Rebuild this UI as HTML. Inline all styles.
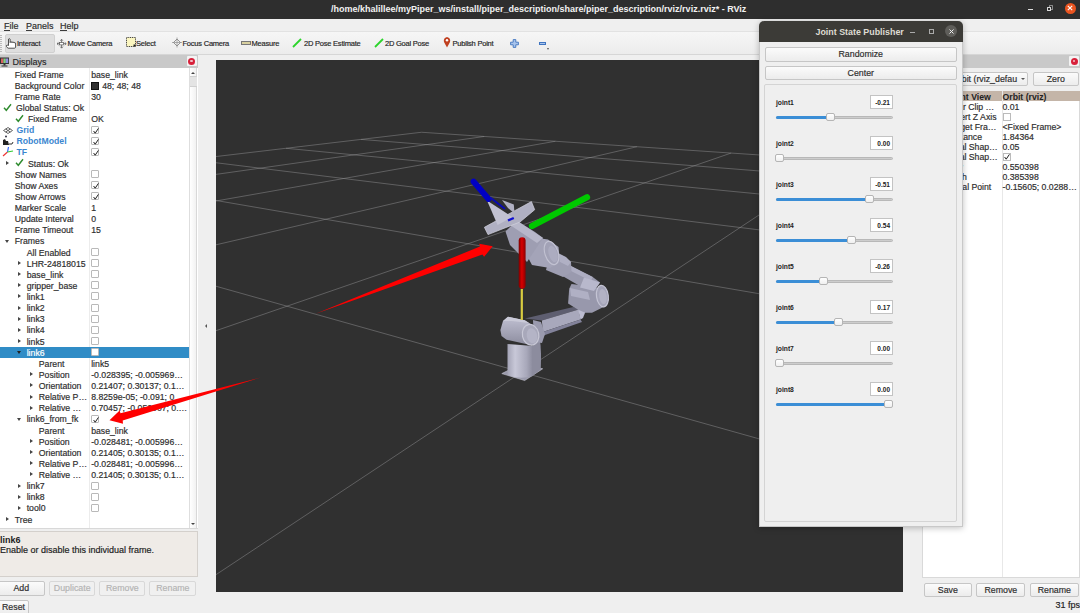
<!DOCTYPE html>
<html><head><meta charset="utf-8">
<style>
*{box-sizing:border-box}
span,div{-webkit-text-stroke:0.18px currentColor}
#title .t,.row .blue,.jl,.jv,.bold0,.hdr span{-webkit-text-stroke:0}
html,body{margin:0;padding:0}
body{width:1080px;height:613px;overflow:hidden;position:relative;background:#efefef;font-family:"Liberation Sans",sans-serif;color:#2e2e2e}
.abs{position:absolute}
#title{position:absolute;left:0;top:0;width:1080px;height:18.5px;background:#2e2e2e}
#title .t{position:absolute;left:331px;top:4px;font-size:9px;font-weight:bold;color:#f2f2f2;white-space:nowrap;letter-spacing:0}
#menu{position:absolute;left:0;top:18.5px;width:1080px;height:13px;background:#efefef;border-bottom:1px solid #e2e2e2}
#menu span{position:absolute;top:2.3px;font-size:9px;color:#2e2e2e}
#menu u{text-decoration:none;border-bottom:1px solid #3c3c3c;line-height:8px;display:inline-block}
#tool{position:absolute;left:0;top:31.5px;width:1080px;height:23px;background:linear-gradient(#f6f6f6,#ececec);border-bottom:1px solid #d6d6d6}
.tb{position:absolute;top:7.6px;font-size:7.5px;letter-spacing:-0.22px;color:#262626;white-space:nowrap}
.row{position:absolute;left:0;width:189.5px;height:11.125px;font-size:8.7px;white-space:nowrap;color:#2e2e2e}
.row.sel{background:#308cc6;color:#fff}
.row .lab{position:absolute;top:1.2px}
.row .val{position:absolute;left:91.2px;top:1.2px}
.row .blue{color:#3a86cf;font-weight:bold}
.row .ico{position:absolute}
.row .cb{position:absolute;left:91px;top:1.6px;width:8px;height:8px;border:1px solid #b9b9b9;border-radius:1px;background:#fff}
.row .arr{position:absolute;top:3.5px;width:0;height:0;border-left:3px solid #444;border-top:2.5px solid transparent;border-bottom:2.5px solid transparent}
.row.sel .arr{border-left-color:#222}
.row .darr{position:absolute;top:4.5px;width:0;height:0;border-top:3px solid #444;border-left:2.5px solid transparent;border-right:2.5px solid transparent}
.row.sel .darr{border-top-color:#222}
.btn{position:absolute;border:1px solid #c6c6c6;border-radius:2px;background:linear-gradient(#fbfbfb,#ececec);font-size:8.8px;text-align:center;color:#2e2e2e}
.btn.dis{color:#b4b4b4;border-color:#d8d8d8;background:#f0f0f0}
.jl{position:absolute;left:776px;font-size:6.7px;font-weight:bold;color:#222;line-height:8px}
.jv{position:absolute;left:869.5px;width:23.5px;height:14.5px;background:#fff;border:1px solid #c3c3c3;font-size:6.5px;font-weight:bold;color:#222;text-align:right;padding-right:2px;line-height:13.5px}
.tr{position:absolute;left:776px;width:117px;height:3px;border-radius:1.5px;background:#cdcdcd;border:0.5px solid #b8b8b8}
.tf{position:absolute;left:776px;height:3px;border-radius:1.5px;background:#3b8ed6}
.hd{position:absolute;width:9px;height:8.5px;background:linear-gradient(#ffffff,#f0f0f0);border:1px solid #b5b5b5;border-radius:2px}
.rrow{position:absolute;left:922px;width:158px;height:9.93px;font-size:8.7px;white-space:nowrap;color:#2e2e2e}
.rrow .a{position:absolute;left:0;top:1.5px;width:79px;text-align:right;overflow:visible}
.rrow .b{position:absolute;left:80.5px;top:1.5px}
</style></head>
<body>
<!-- title bar -->
<div id="title"><span class="t">/home/khalillee/myPiper_ws/install/piper_description/share/piper_description/rviz/rviz.rviz* - RViz</span>
<div class="abs" style="left:1027.5px;top:9px;width:5.5px;height:1.2px;background:#ddd"></div>
<div class="abs" style="left:1049.1px;top:5.4px;width:4px;height:4.4px;border:1px solid #8a8a8a;border-radius:0.5px"></div><div class="abs" style="left:1047.3px;top:7px;width:4px;height:4px;border:1.1px solid #dcdcdc;border-radius:0.5px;background:#2e2e2e"></div>
<div class="abs" style="left:1064.5px;top:2.6px;width:11px;height:11px;border-radius:50%;background:#e95420"></div>
<svg class="abs" style="left:1067px;top:5px" width="6" height="6" viewBox="0 0 6 6"><path d="M0.8 0.8 L5.2 5.2 M5.2 0.8 L0.8 5.2" stroke="#fff" stroke-width="1.1"/></svg>
</div>
<!-- menu -->
<div id="menu"><span style="left:4px"><u>F</u>ile</span><span style="left:26px"><u>P</u>anels</span><span style="left:60px"><u>H</u>elp</span></div>
<!-- toolbar -->
<div id="tool">
 <div class="abs" style="left:5px;top:2.5px;width:49.5px;height:18.5px;background:#dedede;border:1px solid #d0d0d0;border-radius:2px"></div>
 <svg class="abs" style="left:5px;top:5px" width="12" height="12" viewBox="5 36.5 12 12"><path d="M8.5 45 L8.5 38.6 Q9.3 37.6 10.1 38.6 L10.1 42 L10.2 41.5 Q11 40.9 11.9 41.6 L11.9 42.2 L12.1 41.8 Q12.9 41.2 13.8 41.9 L13.8 42.5 L14 42.3 Q14.8 41.8 15.6 42.6 L15.6 46.6 Q15.3 47.6 14.6 47.7 L8.2 47.7 Q7 47.2 6.5 46 L6.4 45 Q7.3 44.3 8.5 45 Z" fill="#fff" stroke="#333" stroke-width="0.85" stroke-linejoin="round"/></svg>
 <span class="tb" style="left:17px">Interact</span>
 <svg class="abs" style="left:56px;top:5px" width="11" height="12" viewBox="56 36.5 11 12"><path d="M61.6 38.8 L61.6 47.6 M57 43.2 L66.2 43.2" stroke="#666" stroke-width="0.9"/><path d="M60.3 40.2 L61.6 38.8 L62.9 40.2 M60.3 46.2 L61.6 47.6 L62.9 46.2 M58.4 41.9 L57 43.2 L58.4 44.5 M64.8 41.9 L66.2 43.2 L64.8 44.5" fill="none" stroke="#666" stroke-width="0.9"/><rect x="59.6" y="42" width="4" height="2.4" fill="#fff" stroke="#555" stroke-width="0.7"/></svg>
 <span class="tb" style="left:67.5px">Move Camera</span>
 <svg class="abs" style="left:126px;top:5.5px" width="10" height="10" viewBox="0 0 10 10"><rect x="0.5" y="0.5" width="9" height="9" fill="#fbf6c0" stroke="#222" stroke-width="0.9" stroke-dasharray="1 0.8"/><rect x="7.5" y="7.5" width="2" height="2" fill="#222"/></svg>
 <span class="tb" style="left:136px">Select</span>
 <svg class="abs" style="left:172px;top:5.5px" width="10" height="11" viewBox="0 0 10 11"><path d="M5 0.5 L5 10.5 M0 5.5 L10 5.5" stroke="#999" stroke-width="0.8"/><path d="M5 2 L8.5 5.5 L5 9 L1.5 5.5Z" fill="none" stroke="#888" stroke-width="0.9"/></svg>
 <span class="tb" style="left:182.5px">Focus Camera</span>
 <div class="abs" style="left:241px;top:9.5px;width:10px;height:3.5px;background:#d8d0a0;border:0.8px solid #777"></div>
 <span class="tb" style="left:251.5px">Measure</span>
 <svg class="abs" style="left:292px;top:6px" width="10" height="10" viewBox="0 0 10 10"><path d="M1 9 L9 1" stroke="#2bd42b" stroke-width="1.8"/></svg>
 <span class="tb" style="left:304px">2D Pose Estimate</span>
 <svg class="abs" style="left:374px;top:6px" width="10" height="10" viewBox="0 0 10 10"><path d="M1 9 L9 1" stroke="#2bd42b" stroke-width="1.8"/></svg>
 <span class="tb" style="left:385px">2D Goal Pose</span>
 <svg class="abs" style="left:443px;top:4.5px" width="8" height="12" viewBox="0 0 8 12"><path d="M4 11.5 L1 6 Q0 2 4 1 Q8 2 7 6 Z" fill="#c04020"/><circle cx="4" cy="4.2" r="1.2" fill="#fff"/></svg>
 <span class="tb" style="left:452.5px">Publish Point</span>
 <svg class="abs" style="left:510px;top:7px" width="9" height="9" viewBox="0 0 9 9"><path d="M3.2 0.6 H5.8 V3.2 H8.4 V5.8 H5.8 V8.4 H3.2 V5.8 H0.6 V3.2 H3.2 Z" fill="#a8c4ec" stroke="#3f74c0" stroke-width="0.9"/></svg>
 <div class="abs" style="left:538.5px;top:10px;width:7.5px;height:3px;background:#a8c4ec;border:0.8px solid #3f74c0"></div>
 <div class="abs" style="left:547px;top:16.5px;width:0;height:0;border-top:2px solid #555;border-left:1.5px solid transparent;border-right:1.5px solid transparent"></div>
 <div class="abs" style="left:0;top:3px;width:2px;height:17px;background:repeating-linear-gradient(#bbb 0 1px,transparent 1px 2px)"></div>
</div>

<!-- left panel -->
<div class="abs" style="left:0;top:54.5px;width:197.5px;height:14px;background:#c9c9c9"></div>
<svg class="abs" style="left:0;top:56.5px" width="10" height="10" viewBox="0 0 10 10"><rect x="0" y="0.5" width="9" height="6.5" fill="#333"/><rect x="1" y="1.5" width="2.4" height="4.5" fill="#d86060"/><rect x="3.4" y="1.5" width="2.4" height="4.5" fill="#80d080"/><rect x="5.8" y="1.5" width="2.4" height="4.5" fill="#9090e0"/><rect x="3.5" y="7" width="2" height="1.5" fill="#333"/><rect x="1.5" y="8.5" width="6" height="1" fill="#333"/></svg>
<span class="abs" style="left:12.5px;top:57px;font-size:9px;color:#2a2a2a">Displays</span>
<div class="abs" style="left:186.5px;top:56px;width:10px;height:10px;background:#f3f3f3;border-radius:1px"></div>
<div class="abs" style="left:188px;top:57.5px;width:7px;height:7px;border-radius:50%;background:#d8203a"></div>
<div class="abs" style="left:190.3px;top:59.8px;width:2.4px;height:2.4px;border-radius:50%;background:#f0c0c8"></div>
<!-- tree -->
<div class="abs" style="left:0;top:68.4px;width:197.5px;height:460px;background:#fff;overflow:hidden">
</div>
<div class="abs" style="left:89.2px;top:68.4px;width:1px;height:460px;background:#ececec"></div>
<div class="row" style="top:68.400px"><span class="lab" style="left:14.8px">Fixed Frame</span><span class="val">base_link</span></div><div class="row" style="top:79.525px"><span class="lab" style="left:14.8px">Background Color</span><span class="val"><span style="display:inline-block;width:8px;height:8px;background:#303030;border:0.5px solid #111;vertical-align:-1px;margin-right:3px"></span>48; 48; 48</span></div><div class="row" style="top:90.650px"><span class="lab" style="left:14.8px">Frame Rate</span><span class="val">30</span></div><div class="row" style="top:101.775px"><span class="ico" style="left:3.2px;top:1px"><svg width="9" height="9" viewBox="0 0 9 9"><path d="M1 4.8 L3.3 7.3 L8 1.3" fill="none" stroke="#2e8b2e" stroke-width="1.4"/></svg></span><span class="lab" style="left:16px">Global Status: Ok</span></div><div class="row" style="top:112.900px"><span class="ico" style="left:14.8px;top:1px"><svg width="9" height="9" viewBox="0 0 9 9"><path d="M1 4.8 L3.3 7.3 L8 1.3" fill="none" stroke="#2e8b2e" stroke-width="1.4"/></svg></span><span class="lab" style="left:28px">Fixed Frame</span><span class="val">OK</span></div><div class="row" style="top:124.025px"><span class="ico" style="left:3px;top:2px"><svg width="10" height="7" viewBox="0 0 10 7"><path d="M5 0.5 L9.5 3.5 L5 6.5 L0.5 3.5Z M2.7 2 L7.3 5 M7.3 2 L2.7 5" fill="none" stroke="#555" stroke-width="0.9"/></svg></span><span class="lab blue" style="left:16.4px">Grid</span><span class="cb" style="background:#fff"><svg width="8" height="8" viewBox="0 0 8 8" style="position:absolute;left:0;top:0"><path d="M1.6 4 L3.2 6.2 L6.4 1.4" fill="none" stroke="#222" stroke-width="1"/></svg></span></div><div class="row" style="top:135.150px"><span class="ico" style="left:2px;top:0px"><svg width="12" height="11" viewBox="0 0 12 11"><circle cx="4" cy="1.5" r="1" fill="#334"/><path d="M1 10 L1 5 L3 4 L4 6 L6 6 L7 10 Z" fill="#222"/><path d="M7 9 L10 9 L11 7" stroke="#333" fill="none"/></svg></span><span class="lab blue" style="left:16.4px">RobotModel</span><span class="cb" style="background:#fff"><svg width="8" height="8" viewBox="0 0 8 8" style="position:absolute;left:0;top:0"><path d="M1.6 4 L3.2 6.2 L6.4 1.4" fill="none" stroke="#222" stroke-width="1"/></svg></span></div><div class="row" style="top:146.275px"><span class="ico" style="left:2px;top:0px"><svg width="12" height="11" viewBox="0 0 12 11"><path d="M1 10 L5.5 6" stroke="#e33" stroke-width="1.2"/><path d="M5.5 6 L6.5 1" stroke="#36f" stroke-width="1.2"/><path d="M5.5 6 L11 5" stroke="#3c3" stroke-width="1.2"/></svg></span><span class="lab blue" style="left:16.4px">TF</span><span class="cb" style="background:#fff"><svg width="8" height="8" viewBox="0 0 8 8" style="position:absolute;left:0;top:0"><path d="M1.6 4 L3.2 6.2 L6.4 1.4" fill="none" stroke="#222" stroke-width="1"/></svg></span></div><div class="row" style="top:157.400px"><span class="ico" style="left:14.8px;top:1px"><svg width="9" height="9" viewBox="0 0 9 9"><path d="M1 4.8 L3.3 7.3 L8 1.3" fill="none" stroke="#2e8b2e" stroke-width="1.4"/></svg></span><span class="arr" style="left:5.5px"></span><span class="lab" style="left:28px">Status: Ok</span></div><div class="row" style="top:168.525px"><span class="lab" style="left:14.8px">Show Names</span><span class="cb" style="background:#fff"></span></div><div class="row" style="top:179.650px"><span class="lab" style="left:14.8px">Show Axes</span><span class="cb" style="background:#fff"><svg width="8" height="8" viewBox="0 0 8 8" style="position:absolute;left:0;top:0"><path d="M1.6 4 L3.2 6.2 L6.4 1.4" fill="none" stroke="#222" stroke-width="1"/></svg></span></div><div class="row" style="top:190.775px"><span class="lab" style="left:14.8px">Show Arrows</span><span class="cb" style="background:#fff"><svg width="8" height="8" viewBox="0 0 8 8" style="position:absolute;left:0;top:0"><path d="M1.6 4 L3.2 6.2 L6.4 1.4" fill="none" stroke="#222" stroke-width="1"/></svg></span></div><div class="row" style="top:201.900px"><span class="lab" style="left:14.8px">Marker Scale</span><span class="val">1</span></div><div class="row" style="top:213.025px"><span class="lab" style="left:14.8px">Update Interval</span><span class="val">0</span></div><div class="row" style="top:224.150px"><span class="lab" style="left:14.8px">Frame Timeout</span><span class="val">15</span></div><div class="row" style="top:235.275px"><span class="darr" style="left:4.5px"></span><span class="lab" style="left:14.8px">Frames</span></div><div class="row" style="top:246.400px"><span class="lab" style="left:26.7px">All Enabled</span><span class="cb" style="background:#fff"></span></div><div class="row" style="top:257.525px"><span class="arr" style="left:17.5px"></span><span class="lab" style="left:26.7px">LHR-24818015</span><span class="cb" style="background:#fff"></span></div><div class="row" style="top:268.650px"><span class="arr" style="left:17.5px"></span><span class="lab" style="left:26.7px">base_link</span><span class="cb" style="background:#fff"></span></div><div class="row" style="top:279.775px"><span class="arr" style="left:17.5px"></span><span class="lab" style="left:26.7px">gripper_base</span><span class="cb" style="background:#fff"></span></div><div class="row" style="top:290.900px"><span class="arr" style="left:17.5px"></span><span class="lab" style="left:26.7px">link1</span><span class="cb" style="background:#fff"></span></div><div class="row" style="top:302.025px"><span class="arr" style="left:17.5px"></span><span class="lab" style="left:26.7px">link2</span><span class="cb" style="background:#fff"></span></div><div class="row" style="top:313.150px"><span class="arr" style="left:17.5px"></span><span class="lab" style="left:26.7px">link3</span><span class="cb" style="background:#fff"></span></div><div class="row" style="top:324.275px"><span class="arr" style="left:17.5px"></span><span class="lab" style="left:26.7px">link4</span><span class="cb" style="background:#fff"></span></div><div class="row" style="top:335.400px"><span class="arr" style="left:17.5px"></span><span class="lab" style="left:26.7px">link5</span><span class="cb" style="background:#fff"></span></div><div class="row sel" style="top:346.525px"><span class="darr" style="left:16.5px"></span><span class="lab" style="left:26.7px">link6</span><span class="cb" style="background:#fff"></span></div><div class="row" style="top:357.650px"><span class="lab" style="left:38.8px">Parent</span><span class="val">link5</span></div><div class="row" style="top:368.775px"><span class="arr" style="left:29.5px"></span><span class="lab" style="left:38.8px">Position</span><span class="val">-0.028395; -0.005969…</span></div><div class="row" style="top:379.900px"><span class="arr" style="left:29.5px"></span><span class="lab" style="left:38.8px">Orientation</span><span class="val">0.21407; 0.30137; 0.1…</span></div><div class="row" style="top:391.025px"><span class="arr" style="left:29.5px"></span><span class="lab" style="left:38.8px">Relative P…</span><span class="val">8.8259e-05; -0.091; 0</span></div><div class="row" style="top:402.150px"><span class="arr" style="left:29.5px"></span><span class="lab" style="left:38.8px">Relative …</span><span class="val">0.70457; -0.050007; 0.…</span></div><div class="row" style="top:413.275px"><span class="darr" style="left:16.5px"></span><span class="lab" style="left:26.7px">link6_from_fk</span><span class="cb" style="background:#fff"><svg width="8" height="8" viewBox="0 0 8 8" style="position:absolute;left:0;top:0"><path d="M1.6 4 L3.2 6.2 L6.4 1.4" fill="none" stroke="#222" stroke-width="1"/></svg></span></div><div class="row" style="top:424.400px"><span class="lab" style="left:38.8px">Parent</span><span class="val">base_link</span></div><div class="row" style="top:435.525px"><span class="arr" style="left:29.5px"></span><span class="lab" style="left:38.8px">Position</span><span class="val">-0.028481; -0.005996…</span></div><div class="row" style="top:446.650px"><span class="arr" style="left:29.5px"></span><span class="lab" style="left:38.8px">Orientation</span><span class="val">0.21405; 0.30135; 0.1…</span></div><div class="row" style="top:457.775px"><span class="arr" style="left:29.5px"></span><span class="lab" style="left:38.8px">Relative P…</span><span class="val">-0.028481; -0.005996…</span></div><div class="row" style="top:468.900px"><span class="arr" style="left:29.5px"></span><span class="lab" style="left:38.8px">Relative …</span><span class="val">0.21405; 0.30135; 0.1…</span></div><div class="row" style="top:480.025px"><span class="arr" style="left:17.5px"></span><span class="lab" style="left:26.7px">link7</span><span class="cb" style="background:#fff"></span></div><div class="row" style="top:491.150px"><span class="arr" style="left:17.5px"></span><span class="lab" style="left:26.7px">link8</span><span class="cb" style="background:#fff"></span></div><div class="row" style="top:502.275px"><span class="arr" style="left:17.5px"></span><span class="lab" style="left:26.7px">tool0</span><span class="cb" style="background:#fff"></span></div><div class="row" style="top:513.400px"><span class="arr" style="left:5.5px"></span><span class="lab" style="left:14.8px">Tree</span></div>
<div class="abs" style="left:189.2px;top:68.4px;width:8.3px;height:460px;background:linear-gradient(90deg,#ffffff,#f2f2f2);border-left:0.8px solid #dedede;border-right:0.6px solid #d8d8d8"></div>
<div class="abs" style="left:191px;top:71.5px;width:0;height:0;border-bottom:2.5px solid #444;border-left:2.5px solid transparent;border-right:2.5px solid transparent"></div>
<div class="abs" style="left:189.5px;top:76px;width:7.8px;height:11.4px;background:#e4e4e4;border-top:0.6px solid #d0d0d0;border-bottom:0.6px solid #d0d0d0"></div>
<div class="abs" style="left:191px;top:523px;width:0;height:0;border-top:2.5px solid #444;border-left:2.5px solid transparent;border-right:2.5px solid transparent"></div>
<div class="abs" style="left:0;top:528px;width:197.5px;height:1px;background:#d8d8d8"></div>
<!-- description -->
<div class="abs" style="left:0;top:531px;width:197.5px;height:45.5px;background:#efebe7;border:1px solid #d4d0cc;border-left:none"></div>
<span class="abs bold0" style="left:0;top:534.5px;font-size:9px;font-weight:bold;color:#222">link6</span>
<span class="abs" style="left:0;top:544.5px;font-size:9px;color:#222;white-space:nowrap">Enable or disable this individual frame.</span>
<div class="btn" style="left:-2px;top:581px;width:46.5px;height:14.5px;line-height:12.5px">Add</div>
<div class="btn dis" style="left:48.9px;top:581px;width:46.6px;height:14.5px;line-height:12.5px">Duplicate</div>
<div class="btn dis" style="left:99.3px;top:581px;width:46.2px;height:14.5px;line-height:12.5px">Remove</div>
<div class="btn dis" style="left:149.4px;top:581px;width:47px;height:14.5px;line-height:12.5px">Rename</div>
<div class="btn" style="left:-2px;top:599.5px;width:31px;height:15px;line-height:12.5px">Reset</div>

<!-- splitter arrow -->
<div class="abs" style="left:204.5px;top:324px;width:0;height:0;border-right:2.5px solid #555;border-top:2px solid transparent;border-bottom:2px solid transparent"></div>

<!-- viewport -->
<svg class="abs" style="left:216px;top:60px" width="687" height="532" viewBox="0 0 687 532">
<rect width="687" height="532" fill="#303030"/>
<g stroke="#a0a0a4" stroke-opacity="0.5" stroke-width="0.85" fill="none"><line x1="205.53" y1="72.26" x2="1663.17" y2="170.17"/><line x1="205.53" y1="72.26" x2="-18250.76" y2="2253.26"/><line x1="145.05" y1="79.41" x2="1945.61" y2="222.06"/><line x1="268.23" y1="76.47" x2="-75786.32" y2="10831.11"/><line x1="70.00" y1="88.28" x2="2488.54" y2="321.81"/><line x1="339.40" y1="81.25" x2="-60733.47" y2="10831.11"/><line x1="-25.59" y1="99.57" x2="3960.83" y2="592.31"/><line x1="420.89" y1="86.73" x2="-45680.62" y2="10831.11"/><line x1="-151.51" y1="114.45" x2="22919.10" y2="4075.45"/><line x1="515.12" y1="93.06" x2="-30627.78" y2="10831.11"/><line x1="-324.90" y1="134.94" x2="37737.26" y2="10831.11"/><line x1="625.34" y1="100.46" x2="-15574.93" y2="10831.11"/><line x1="-578.85" y1="164.95" x2="13207.36" y2="10831.11"/><line x1="755.98" y1="109.23" x2="-522.08" y2="10831.11"/><line x1="-986.47" y1="213.12" x2="-11322.55" y2="10831.11"/><line x1="913.30" y1="119.80" x2="14530.77" y2="10831.11"/><line x1="-1747.79" y1="303.09" x2="-35852.46" y2="10831.11"/><line x1="1106.40" y1="132.77" x2="29583.62" y2="10831.11"/><line x1="-3675.94" y1="530.94" x2="-60382.36" y2="10831.11"/><line x1="1349.06" y1="149.07" x2="44636.47" y2="10831.11"/><line x1="-18250.76" y1="2253.26" x2="-84912.27" y2="10831.11"/><line x1="1663.17" y1="170.17" x2="59689.32" y2="10831.11"/></g>
<g transform="translate(-216,-60)">
<defs>
<linearGradient id="ped" x1="0" y1="0" x2="1" y2="0"><stop offset="0" stop-color="#a4a4b6"/><stop offset="0.3" stop-color="#c8c8d8"/><stop offset="0.75" stop-color="#a8a8ba"/><stop offset="1" stop-color="#8a8a9c"/></linearGradient>
<linearGradient id="ax_r" x1="0" y1="0" x2="1" y2="0"><stop offset="0" stop-color="#7a0000"/><stop offset="0.45" stop-color="#d80000"/><stop offset="1" stop-color="#8a0000"/></linearGradient>
<linearGradient id="cylA" x1="0" y1="0" x2="0" y2="1"><stop offset="0" stop-color="#c0c0d2"/><stop offset="1" stop-color="#8c8c9e"/></linearGradient>
</defs>
<!-- base plate -->
<path d="M501.8 373.6 L524.7 380.5 L542.7 368.8 L522 363.5 Z" fill="#9a9aac" stroke="#c4c4d2" stroke-width="0.6"/>
<!-- pedestal -->
<path d="M507.5 344 L533 346 L533 376 Q520 380 507.5 375 Z" fill="url(#ped)"/>
<path d="M532.5 342 L540 341 Q541.5 350 540.8 369 L532.5 376 Z" fill="#8c8c9e"/>
<!-- upper arm -->
<path d="M524.9 318.6 L573.3 306.9 L578.7 309.6 L541.9 320.4 Z" fill="#5e5e70"/>
<path d="M541.9 320.4 L578.7 309.6 L580.5 319.5 L542.8 332 Z" fill="#a8a8bc"/>
<path d="M542.8 332 L580.5 319.5 L582 322 L545 335 L540 338 Z" fill="#82829a"/>
<path d="M578 309 L590 300 L583 318 L580.5 319.5 Z" fill="#bcbcd0"/>
<path d="M533 320 L541 322 L545 334 L542 343 L534 342 Z" fill="#9a9aae"/>
<!-- shoulder -->
<path d="M500.4 330 L503 321 L508 316.8 L524.7 320.2 L531.6 324.4 L538.5 333 L537.8 342 L531.6 345.2 L506.6 339.7 L501.5 336 Z" fill="url(#cylA)"/>
<path d="M503 321 L508 316.8 L524.7 320.2 L529 323 L512 321 Z" fill="#cacad8"/>
<ellipse cx="530.6" cy="334.8" rx="8.2" ry="10.4" transform="rotate(-12 530.6 334.8)" fill="#a8a8ba" stroke="#c8c8d6" stroke-width="1.2"/>
<ellipse cx="532" cy="335.8" rx="5.2" ry="7.6" transform="rotate(-12 532 335.8)" fill="#b4b4c6"/>
<!-- elbow housing -->
<path d="M568.1 303.5 L569.2 288.7 L571.5 284.1 L592 286.4 L603 290 L607 300 L603.5 307 L592 312.7 L585.2 312.7 L577.2 309.2 Z" fill="#9898ac"/>
<path d="M570 288 L588 292 L590 300 L571 296 Z" fill="#b0b0c4"/>

<ellipse cx="602.4" cy="296.1" rx="5.9" ry="10.8" transform="rotate(-8 602.4 296.1)" fill="#a4a4b8" stroke="#c4c4d4" stroke-width="1.2"/>
<ellipse cx="603" cy="296.5" rx="3.8" ry="7.6" transform="rotate(-8 603 296.5)" fill="#b2b2c4"/>
<!-- forearm rod -->
<path d="M566 263.5 L592.7 277 L600 282.5 L594 291 L585 289 L562.5 276 Z" fill="#9a9aae"/>
<path d="M566 263.5 L592.7 277 L591 281 L565 268 Z" fill="#aeaec2"/>
<path d="M584 277.5 L600 282.5 L594 291 L580 287.5 Z" fill="#b8b8cc"/>
<!-- link4 segment -->
<path d="M550 254 L563 256 L571 262 L571.5 272 L563 277 L546 270 Z" fill="#9e9eb2"/>
<path d="M556 252 L566 257 L571 262 L568 266 L556 260 Z" fill="#b0b0c4"/>
<!-- wrist housing -->
<path d="M523 248 L538 238 L548 239.5 L558.5 247 L560 262 L550 268 L532 265 Z" fill="#a4a4b8"/>
<ellipse cx="551.5" cy="253" rx="6.6" ry="12" transform="rotate(-18 551.5 253)" fill="#a2a2b6" stroke="#c2c2d2" stroke-width="1.1"/>
<ellipse cx="553" cy="254" rx="4.2" ry="8.5" transform="rotate(-18 553 254)" fill="#acacc0"/>
<!-- wrist rod link6 -->
<path d="M505.5 231.6 L516.6 220.5 L535 232 L543 238 L535 250 L527 262 L510 245 Z" fill="#9e9eb2"/>
<path d="M510 225 L516.6 220.5 L543 238 L537 243 Z" fill="#b8b8ca"/>
<!-- gripper cross -->
<path d="M484.4 227.3 L531.4 201.6 L534.7 209.7 L520 222 L488 234.6 Z" fill="#b0b0c2" stroke="#d2d2de" stroke-width="0.7"/>
<path d="M487 200.5 L512.3 217 L497.6 225.1 Z" fill="#c2c2d2"/>
<path d="M502 200.1 L513.8 204.5 L514.5 213.4 L508 208 Z" fill="#b0b0c2"/>
<!-- axes -->
<path d="M473.5 181.5 L488.5 199" stroke="#0000c4" stroke-width="5.8" stroke-linecap="round"/>
<path d="M490.3 197.5 L505 209" stroke="#0a0ab4" stroke-width="2"/>
<path d="M508 220.5 L513.8 218" stroke="#1010d0" stroke-width="2.4"/>
<path d="M532 226 L587 197.2" stroke="#00c800" stroke-width="6.2" stroke-linecap="round"/>
<rect x="518.7" y="237.2" width="6.9" height="51.5" rx="3.4" fill="url(#ax_r)"/>
<path d="M521.8 289 L521.8 320" stroke="#d8cc40" stroke-width="2.2"/>
</g>

</svg>

<!-- right panel -->
<div class="abs" style="left:921px;top:54.5px;width:159px;height:13.5px;background:#c9c9c9"></div>
<div class="abs" style="left:1069px;top:56px;width:10px;height:10px;background:#f3f3f3;border-radius:1px"></div>
<div class="abs" style="left:1070.5px;top:57.5px;width:7px;height:7px;border-radius:50%;background:#d8203a"></div>
<div class="abs" style="left:1072.8px;top:59.8px;width:2.4px;height:2.4px;border-radius:50%;background:#f0c0c8"></div>
<div class="btn" style="left:930px;top:71.5px;width:98px;height:14.5px;text-align:left;padding-left:21px;line-height:12.5px;white-space:nowrap;overflow:hidden">Orbit (rviz_defau</div>
<div class="abs" style="left:1021px;top:77.5px;width:0;height:0;border-top:2.5px solid #555;border-left:2.5px solid transparent;border-right:2.5px solid transparent"></div>
<div class="btn" style="left:1032.5px;top:71.5px;width:46.5px;height:14.5px;line-height:12.5px">Zero</div>
<div class="abs" style="left:922px;top:90.5px;width:158px;height:487.5px;background:#fff;border:1px solid #d9d9d9"></div>
<div class="abs" style="left:922px;top:91.2px;width:158px;height:9.5px;background:#c4b5a8"></div>
<div class="abs" style="left:1001.5px;top:91.2px;width:1px;height:486px;background:#e8e8e8"></div>
<div class="rrow hdr" style="top:90.5px;font-weight:bold;color:#222"><span class="a" style="width:68.8px">Current View</span><span class="b">Orbit (rviz)</span></div>
<div class="rrow" style="top:100.7px"><span class="a" style="width:72.3px">Near Clip …</span><span class="b">0.01</span></div>
<div class="rrow" style="top:110.6px"><span class="a" style="width:74.5px">Invert Z Axis</span><span class="b"><span style="display:inline-block;width:8px;height:8px;border:1px solid #bbb;margin-top:1px"></span></span></div>
<div class="rrow" style="top:120.5px"><span class="a" style="width:74.5px">Target Fra…</span><span class="b">&lt;Fixed Frame&gt;</span></div>
<div class="rrow" style="top:130.5px"><span class="a" style="width:60.0px">Distance</span><span class="b">1.84364</span></div>
<div class="rrow" style="top:140.4px"><span class="a" style="width:75.8px">Focal Shap…</span><span class="b">0.05</span></div>
<div class="rrow" style="top:150.3px"><span class="a" style="width:75.8px">Focal Shap…</span><span class="b"><span style="position:relative;display:inline-block;width:8px;height:8px;border:1px solid #bbb;margin-top:1px"><svg width="8" height="8" viewBox="0 0 8 8" style="position:absolute;left:-1px;top:-1px"><path d="M1.6 4 L3.2 6.2 L6.4 1.4" fill="none" stroke="#222" stroke-width="1"/></svg></span></span></div>
<div class="rrow" style="top:160.3px"><span class="a" style="width:40.9px">Yaw</span><span class="b">0.550398</span></div>
<div class="rrow" style="top:170.2px"><span class="a" style="width:44.9px">Pitch</span><span class="b">0.385398</span></div>
<div class="rrow" style="top:180.1px"><span class="a" style="width:69.3px">Focal Point</span><span class="b">-0.15605; 0.0288…</span></div>
<div class="btn" style="left:923.5px;top:582.5px;width:48.7px;height:14px;line-height:12px">Save</div>
<div class="btn" style="left:976.3px;top:582.5px;width:49.2px;height:14px;line-height:12px">Remove</div>
<div class="btn" style="left:1029.6px;top:582.5px;width:49.4px;height:14px;line-height:12px">Rename</div>
<span class="abs" style="left:1055.5px;top:600px;font-size:9px;color:#222;white-space:nowrap">31 fps</span>

<!-- Joint state publisher dialog -->
<div class="abs" style="left:759px;top:20.5px;width:203.5px;height:506.5px;background:#efefef;border-radius:5px 5px 0 0;box-shadow:0 1px 6px rgba(0,0,0,0.25);border:1px solid #c8c8c8;border-top:none"></div>
<div class="abs" style="left:759px;top:20.5px;width:203.5px;height:21.3px;background:#3c3b37;border-radius:5px 5px 0 0"></div>
<span class="abs bold0" style="left:815.5px;top:26.5px;font-size:8.9px;font-weight:bold;color:#dfdbd2;white-space:nowrap">Joint State Publisher</span>
<div class="abs" style="left:910px;top:31.5px;width:5px;height:1px;background:#aaa"></div>
<div class="abs" style="left:929px;top:28.5px;width:5px;height:5px;border:1px solid #aaa"></div>
<div class="abs" style="left:945px;top:25px;width:12px;height:12px;border-radius:50%;background:#5f5e5a"></div>
<svg class="abs" style="left:948.5px;top:28.5px" width="5" height="5" viewBox="0 0 5 5"><path d="M0.5 0.5 L4.5 4.5 M4.5 0.5 L0.5 4.5" stroke="#eee" stroke-width="1"/></svg>
<div class="btn" style="left:764.5px;top:47.3px;width:192.5px;height:14.3px;line-height:12.5px">Randomize</div>
<div class="btn" style="left:764.5px;top:65.8px;width:192.5px;height:14.3px;line-height:12.5px">Center</div>
<div class="abs" style="left:764.3px;top:83.7px;width:192.5px;height:438px;border:1px solid #d4d4d4;border-radius:2px;background:#efefef"></div>
<div class="jl" style="top:98.5px">joint1</div><div class="jv" style="top:94.5px">-0.21</div><div class="tr" style="top:115.8px"></div><div class="tf" style="top:115.8px;width:54.0px"></div><div class="hd" style="left:825.5px;top:112.8px"></div><div class="jl" style="top:139.5px">joint2</div><div class="jv" style="top:135.5px">0.00</div><div class="tr" style="top:156.8px"></div><div class="hd" style="left:775.0px;top:153.8px"></div><div class="jl" style="top:180.5px">joint3</div><div class="jv" style="top:176.5px">-0.51</div><div class="tr" style="top:197.8px"></div><div class="tf" style="top:197.8px;width:93.5px"></div><div class="hd" style="left:865.0px;top:194.8px"></div><div class="jl" style="top:221.5px">joint4</div><div class="jv" style="top:217.5px">0.54</div><div class="tr" style="top:238.8px"></div><div class="tf" style="top:238.8px;width:75.0px"></div><div class="hd" style="left:846.5px;top:235.8px"></div><div class="jl" style="top:262.5px">joint5</div><div class="jv" style="top:258.5px">-0.26</div><div class="tr" style="top:279.8px"></div><div class="tf" style="top:279.8px;width:47.0px"></div><div class="hd" style="left:818.5px;top:276.8px"></div><div class="jl" style="top:303.5px">joint6</div><div class="jv" style="top:299.5px">0.17</div><div class="tr" style="top:320.8px"></div><div class="tf" style="top:320.8px;width:62.7px"></div><div class="hd" style="left:834.2px;top:317.8px"></div><div class="jl" style="top:344.5px">joint7</div><div class="jv" style="top:340.5px">0.00</div><div class="tr" style="top:361.8px"></div><div class="hd" style="left:775.0px;top:358.8px"></div><div class="jl" style="top:385.5px">joint8</div><div class="jv" style="top:381.5px">0.00</div><div class="tr" style="top:402.8px"></div><div class="tf" style="top:402.8px;width:112.5px"></div><div class="hd" style="left:884.0px;top:399.8px"></div>

<!-- annotation arrows -->
<svg class="abs" style="left:0;top:0" width="1080" height="613" viewBox="0 0 1080 613">
<path d="M315.7 313.7 L480 246.5 L479.2 243.8 L492.7 246.3 L484.1 256.8 L482.4 254.6 Z" fill="#ff0000"/>
<path d="M260.8 377.5 L120.5 413.2 L119.6 410.5 L109.5 420.3 L123 423.7 L122.7 420.5 Z" fill="#ff0000"/>
</svg>
</body></html>
